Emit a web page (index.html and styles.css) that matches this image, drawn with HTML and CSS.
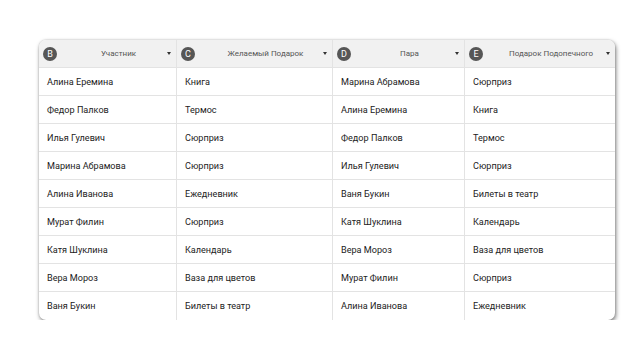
FILE: index.html
```html
<!DOCTYPE html>
<html lang="ru">
<head>
  <meta charset="UTF-8">
  <meta name="viewport" content="width=device-width, initial-scale=1.0">
  <title>Тайный Санта</title>
  <link rel="stylesheet" href="styles.css">
</head>
<body>
  <div class="sheet">
    <div class="sheet__head">
      <span class="col-letter">B</span>
      <span class="col-title">Участник</span>
      <span class="col-arrow"></span>
    </div>
    <div class="sheet__head">
      <span class="col-letter">C</span>
      <span class="col-title">Желаемый Подарок</span>
      <span class="col-arrow"></span>
    </div>
    <div class="sheet__head">
      <span class="col-letter">D</span>
      <span class="col-title">Пара</span>
      <span class="col-arrow"></span>
    </div>
    <div class="sheet__head">
      <span class="col-letter">E</span>
      <span class="col-title">Подарок Подопечного</span>
      <span class="col-arrow"></span>
    </div>

    <div class="cell">Алина Еремина</div>
    <div class="cell">Книга</div>
    <div class="cell">Марина Абрамова</div>
    <div class="cell">Сюрприз</div>

    <div class="cell">Федор Палков</div>
    <div class="cell">Термос</div>
    <div class="cell">Алина Еремина</div>
    <div class="cell">Книга</div>

    <div class="cell">Илья Гулевич</div>
    <div class="cell">Сюрприз</div>
    <div class="cell">Федор Палков</div>
    <div class="cell">Термос</div>

    <div class="cell">Марина Абрамова</div>
    <div class="cell">Сюрприз</div>
    <div class="cell">Илья Гулевич</div>
    <div class="cell">Сюрприз</div>

    <div class="cell">Алина Иванова</div>
    <div class="cell">Ежедневник</div>
    <div class="cell">Ваня Букин</div>
    <div class="cell">Билеты в театр</div>

    <div class="cell">Мурат Филин</div>
    <div class="cell">Сюрприз</div>
    <div class="cell">Катя Шуклина</div>
    <div class="cell">Календарь</div>

    <div class="cell">Катя Шуклина</div>
    <div class="cell">Календарь</div>
    <div class="cell">Вера Мороз</div>
    <div class="cell">Ваза для цветов</div>

    <div class="cell">Вера Мороз</div>
    <div class="cell">Ваза для цветов</div>
    <div class="cell">Мурат Филин</div>
    <div class="cell">Сюрприз</div>

    <div class="cell">Ваня Букин</div>
    <div class="cell">Билеты в театр</div>
    <div class="cell">Алина Иванова</div>
    <div class="cell">Ежедневник</div>
  </div>
</body>
</html>
```

FILE: styles.css
```css
body {
  margin: 0;
  padding: 40px 0 0 39px;
  background-color: #fff;
  font-family: Roboto, "Liberation Sans", sans-serif;
}

* {
  box-sizing: border-box;
}

.sheet {
  display: grid;
  grid-template-columns: 138px 156px 132px 150px;
  grid-auto-rows: 28px;
  width: 576px;
  background-color: #fff;
  border-radius: 7px;
  overflow: hidden;
  box-shadow: 1px 2px 4px rgba(0, 0, 0, .5), 0 0 2px rgba(0, 0, 0, .2);
}

.sheet__head,
.cell {
  border-right: 1px solid #e3e3e3;
  border-bottom: 1px solid #e3e3e3;
}

.sheet__head:nth-child(4n),
.cell:nth-child(4n) {
  border-right: none;
}

.sheet__head {
  display: flex;
  align-items: center;
  padding: 0 5px 0 4px;
  background-color: #f1f1f1;
}

.col-letter {
  display: flex;
  justify-content: center;
  align-items: center;
  width: 14px;
  height: 14px;
  border-radius: 50%;
  background-color: #565656;
  color: #fff;
  font-size: 9px;
}

.col-title {
  flex: 1;
  padding-left: 17px;
  text-align: center;
  font-size: 8px;
  color: #555;
}

.col-arrow {
  width: 0;
  height: 0;
  margin-left: 4px;
  border-left: 2.5px solid transparent;
  border-right: 2.5px solid transparent;
  border-top: 3px solid #333;
}

.cell {
  display: flex;
  align-items: center;
  padding-left: 8px;
  font-size: 9.1px;
  color: #222;
}

.sheet .cell:nth-last-child(-n+4) {
  border-bottom: none;
}
```
